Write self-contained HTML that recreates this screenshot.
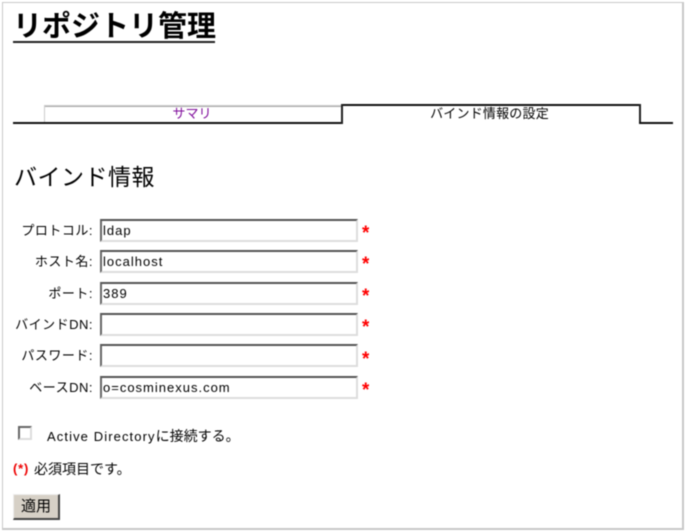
<!DOCTYPE html>
<html lang="ja"><head><meta charset="utf-8">
<style>
html,body{margin:0;padding:0;background:#fff;width:685px;height:532px;overflow:hidden}
#p{position:absolute;left:0;top:0;width:685px;height:532px;font-family:"Liberation Sans","Noto Sans CJK JP",sans-serif;color:#000;filter:blur(.45px)}
#p div{position:absolute;white-space:nowrap}
.l{right:592px;font-size:13px;line-height:18px;text-align:right;letter-spacing:.5px}
.i{left:100px;width:254px;height:19px;border-top:2px solid #555;border-left:2px solid #666;border-right:2px solid #ddd;border-bottom:2px solid #ddd;background:#fff;font-size:13px;line-height:19px;padding:0}
.i span{margin-left:1px;letter-spacing:1px}
.s{left:362px;color:#f00;font-size:19px;line-height:22px;height:18px;overflow:hidden;font-weight:bold}
</style></head><body><div id="p">
<div style="left:2px;top:2px;width:679px;height:525px;border:1px solid #c8c8c8;border-width:1px 2px 2px 1px"></div>

<div style="left:13px;top:7px;font-size:29px;line-height:40px;font-weight:bold;color:#000">リポジトリ管理</div>
<div style="left:13px;top:41px;width:202px;height:2px;background:#222"></div>

<div style="left:13px;top:122px;width:329px;height:2px;background:#111"></div>
<div style="left:44px;top:105px;width:297px;height:1px;background:#aaa;border-top:1px solid #ccc"></div>
<div style="left:44px;top:105px;width:1px;height:17px;background:#ccc"></div>
<div style="left:44px;top:105px;width:296px;text-align:center;font-size:13px;line-height:18px;color:#800e9c">サマリ</div>

<div style="left:342px;top:104px;width:297px;height:2px;background:#111"></div>
<div style="left:341px;top:104px;width:2px;height:20px;background:#222"></div>
<div style="left:639px;top:104px;width:2px;height:20px;background:#222"></div>
<div style="left:639px;top:122px;width:34px;height:2px;background:#111"></div>
<div style="left:341px;top:105px;width:297px;text-align:center;font-size:13px;line-height:18px;letter-spacing:.2px">バインド情報の設定</div>

<div style="left:14px;top:163px;font-size:23px;line-height:28px;color:#000;letter-spacing:.5px">バインド情報</div>

<div class="l" style="top:222px">プロトコル:</div>
<div class="i" style="top:219px"><span>ldap</span></div><div class="s" style="top:223px">*</div>
<div class="l" style="top:253px">ホスト名:</div>
<div class="i" style="top:250px"><span>localhost</span></div><div class="s" style="top:254px">*</div>
<div class="l" style="top:285px">ポート:</div>
<div class="i" style="top:282px"><span>389</span></div><div class="s" style="top:286px">*</div>
<div class="l" style="top:316px">バインドDN:</div>
<div class="i" style="top:313px"></div><div class="s" style="top:317px">*</div>
<div class="l" style="top:347px">パスワード:</div>
<div class="i" style="top:344px"></div><div class="s" style="top:349px">*</div>
<div class="l" style="top:379px">ベースDN:</div>
<div class="i" style="top:376px"><span>o=cosminexus.com</span></div><div class="s" style="top:380px">*</div>

<div style="left:18px;top:426px;width:10px;height:10px;border-top:2px solid #666;border-left:2px solid #666;border-right:2px solid #ddd;border-bottom:2px solid #ddd;background:#fff"></div>
<div style="left:47px;top:427px;font-size:14px;line-height:18px;letter-spacing:0"><span style="font-size:13px;letter-spacing:1.1px">Active Directory</span>に接続する。</div>

<div style="left:13px;top:460px;font-size:13px;line-height:18px;color:#e00;letter-spacing:.8px"><b>(*)</b></div>
<div style="left:34px;top:460px;font-size:14px;line-height:18px">必須項目です。</div>

<div style="left:13px;top:494px;width:44px;height:23px;background:#d6d0c6;border-top:1px solid #eee;border-left:1px solid #eee;border-right:2px solid #444;border-bottom:2px solid #444;text-align:center;font-size:15px;line-height:23px;color:#000">適用</div>
</div></body></html>
